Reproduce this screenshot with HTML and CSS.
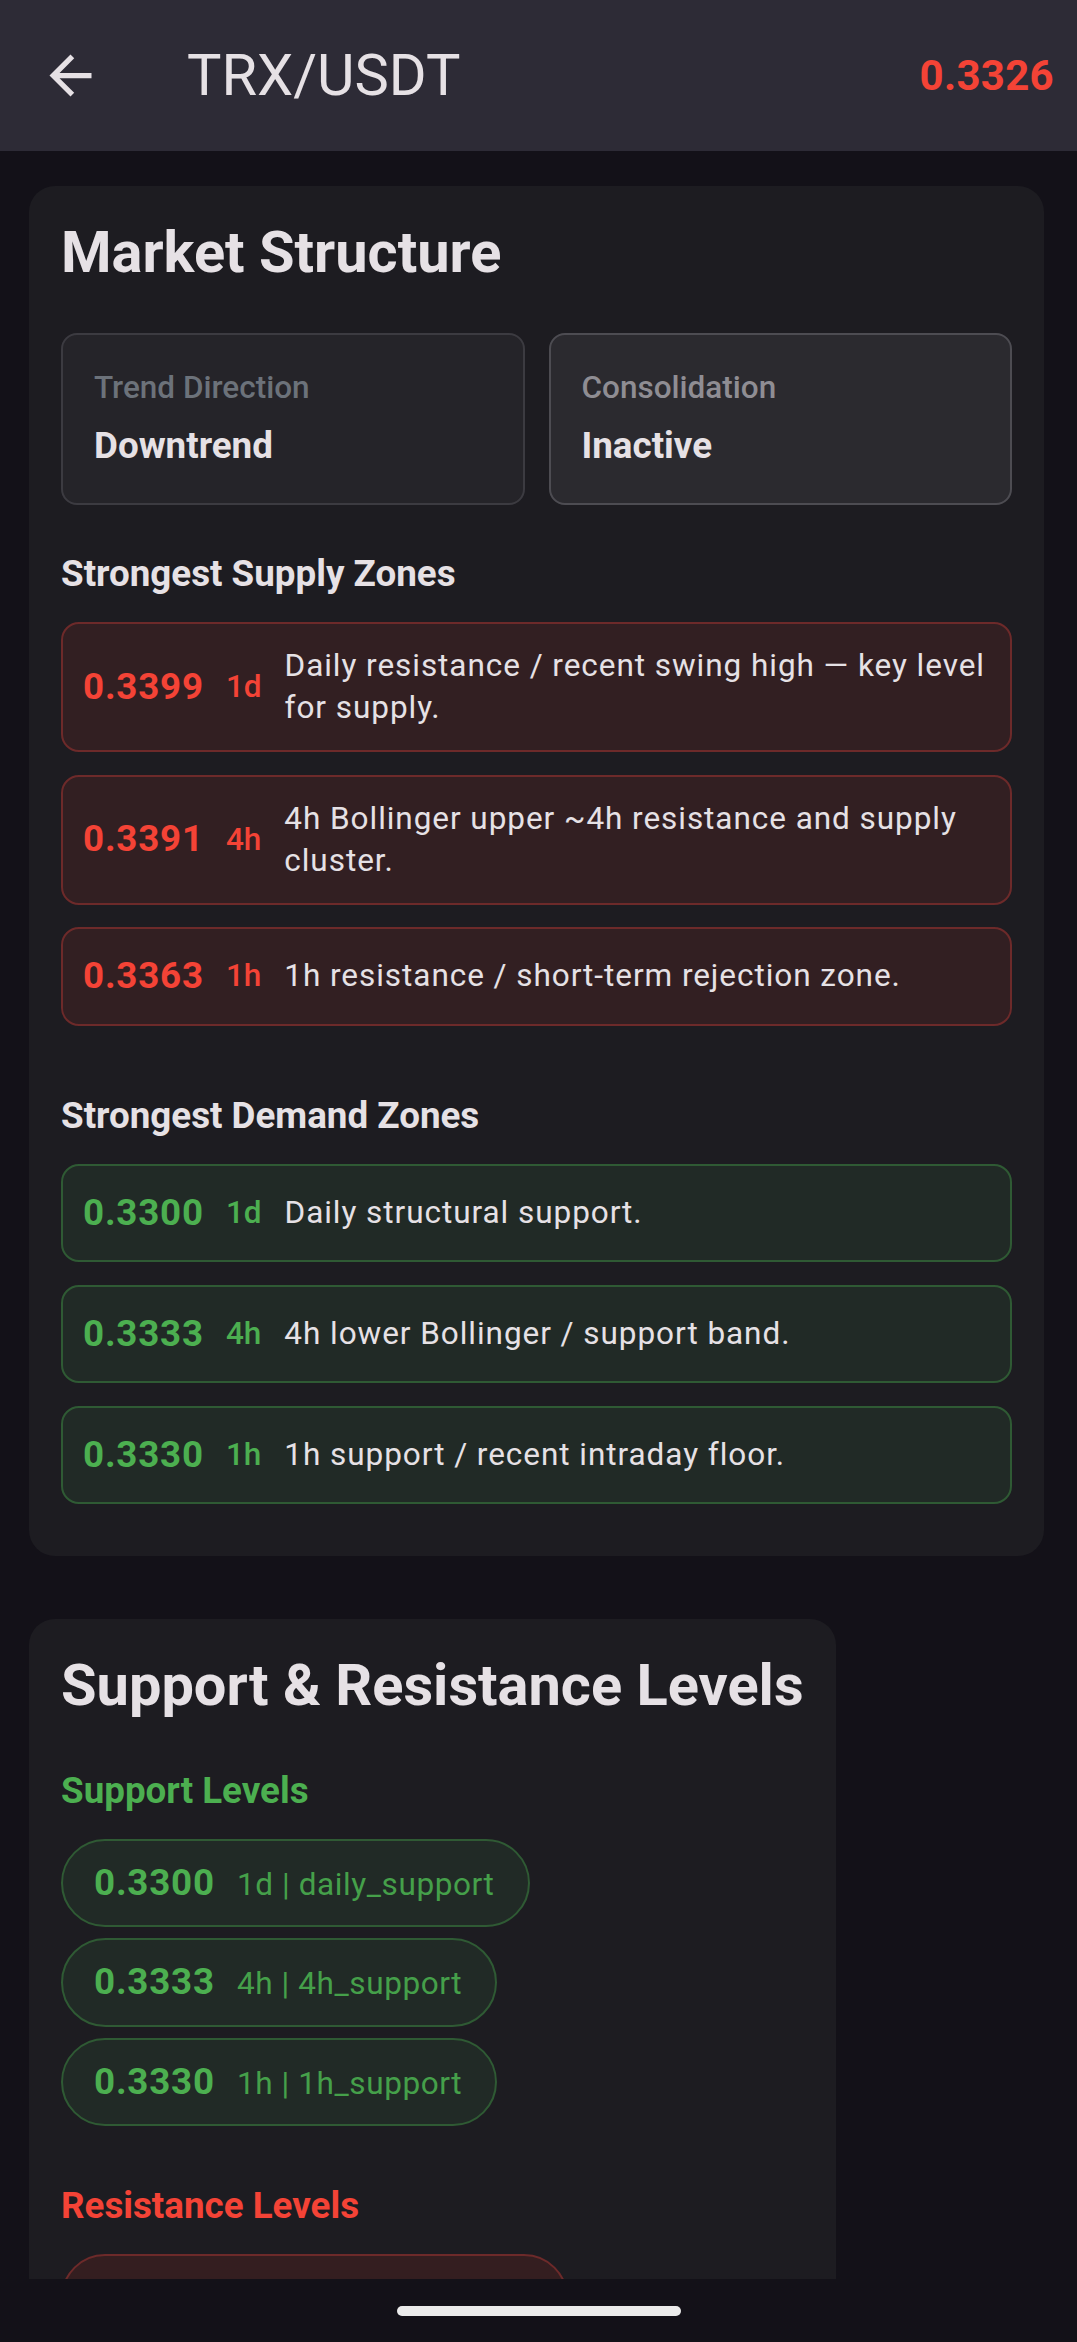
FILE: index.html
```html
<!DOCTYPE html>
<html lang="en">
<head>
<meta charset="utf-8">
<title>TRX/USDT</title>
<link rel="stylesheet" href="styles.css">
</head>
<body>
<div class="app">
  <header class="appbar">
    <svg class="back" viewBox="0 0 24 24" aria-hidden="true"><path d="M20 11H7.83l5.59-5.59L12 4l-8 8 8 8 1.41-1.41L7.83 13H20v-2z"/></svg>
    <h1 class="appbar-title">TRX/USDT</h1>
    <span class="appbar-price">0.3326</span>
  </header>

  <main class="content">
    <section class="card card-full">
      <h2 class="card-title">Market Structure</h2>
      <div class="stat-grid">
        <div class="stat stat-trend">
          <div class="stat-label">Trend Direction</div>
          <div class="stat-value">Downtrend</div>
        </div>
        <div class="stat stat-cons">
          <div class="stat-label">Consolidation</div>
          <div class="stat-value">Inactive</div>
        </div>
      </div>

      <h3 class="section-title">Strongest Supply Zones</h3>
      <div class="zone zone-supply">
        <span class="zone-price">0.3399</span>
        <span class="zone-tf">1d</span>
        <span class="zone-desc">Daily resistance / recent swing high — key level for supply.</span>
      </div>
      <div class="zone zone-supply">
        <span class="zone-price">0.3391</span>
        <span class="zone-tf">4h</span>
        <span class="zone-desc">4h Bollinger upper ~4h resistance and supply cluster.</span>
      </div>
      <div class="zone zone-supply">
        <span class="zone-price">0.3363</span>
        <span class="zone-tf">1h</span>
        <span class="zone-desc">1h resistance / short-term rejection zone.</span>
      </div>

      <h3 class="section-title section-gap">Strongest Demand Zones</h3>
      <div class="zone zone-demand">
        <span class="zone-price">0.3300</span>
        <span class="zone-tf">1d</span>
        <span class="zone-desc">Daily structural support.</span>
      </div>
      <div class="zone zone-demand">
        <span class="zone-price">0.3333</span>
        <span class="zone-tf">4h</span>
        <span class="zone-desc">4h lower Bollinger / support band.</span>
      </div>
      <div class="zone zone-demand">
        <span class="zone-price">0.3330</span>
        <span class="zone-tf">1h</span>
        <span class="zone-desc">1h support / recent intraday floor.</span>
      </div>
    </section>

    <section class="card card-fit">
      <h2 class="card-title">Support &amp; Resistance Levels</h2>
      <h3 class="level-title level-support">Support Levels</h3>
      <div class="chips">
        <div class="chip chip-support"><span class="chip-price">0.3300</span><span class="chip-meta">1d | daily_support</span></div>
        <div class="chip chip-support"><span class="chip-price">0.3333</span><span class="chip-meta">4h | 4h_support</span></div>
        <div class="chip chip-support"><span class="chip-price">0.3330</span><span class="chip-meta">1h | 1h_support</span></div>
      </div>
      <h3 class="level-title level-resist">Resistance Levels</h3>
      <div class="chips">
        <div class="chip chip-resist"><span class="chip-price">0.3399</span><span class="chip-meta">1d | daily_resistance</span></div>
      </div>
    </section>
  </main>

  <footer class="navbar"><div class="pill"></div></footer>
</div>
</body>
</html>
```

FILE: styles.css
```css
* { box-sizing: border-box; }

html, body {
  margin: 0;
  padding: 0;
  background: #131118;
  font-family: Roboto, "Noto Sans", "Liberation Sans", sans-serif;
  color: #e6e1e5;
}

.app {
  width: 1077px;
  height: 2342px;
  display: flex;
  flex-direction: column;
  overflow: hidden;
}

/* App bar */
.appbar {
  flex: 0 0 151px;
  height: 151px;
  background: #2d2b36;
  display: flex;
  align-items: center;
  padding: 0 23px 0 39px;
}
.back {
  width: 63px;
  height: 63px;
  fill: #e6e1e5;
  flex: 0 0 auto;
}
.appbar-title {
  margin: 0 0 0 85px;
  font-size: 57.75px;
  font-weight: 400;
  line-height: 73px;
  color: #e6e1e5;
  flex: 1;
}
.appbar-price {
  font-size: 42px;
  font-weight: 700;
  color: #f44336;
  letter-spacing: 0.3px;
}

/* Scroll area */
.content {
  flex: 1 1 auto;
  overflow: hidden;
  padding: 35px 33px 0 29px;
}

.card {
  background: #1d1c21;
  border-radius: 26px;
  padding: 30px 32px 29px;
}
.card-fit {
  width: fit-content;
  margin-top: 63px;
}

.card-title {
  margin: 0;
  font-size: 57.75px;
  line-height: 73.5px;
  font-weight: 700;
  color: #e6e1e5;
}

/* Stat boxes */
.stat-grid {
  margin-top: 43px;
  display: grid;
  grid-template-columns: 1fr 1fr;
  gap: 24px;
}
.stat {
  border: 2px solid #3c3b41;
  background: #252429;
  border-radius: 16px;
  padding: 32px 31px 31px;
}
.stat-cons {
  border-color: #4d4c52;
  background: #2b2a2f;
}
.stat-label {
  font-size: 31.5px;
  line-height: 42px;
  font-weight: 500;
  color: #6c727a;
}
.stat-cons .stat-label { color: #8f8d93; }
.stat-value {
  margin-top: 11px;
  font-size: 36.75px;
  line-height: 52.5px;
  font-weight: 700;
  color: #e6e1e5;
}

/* Zones */
.section-title {
  margin: 43px 0 21.5px;
  font-size: 36.75px;
  line-height: 52.5px;
  font-weight: 700;
  color: #e6e1e5;
}
.section-gap { margin-top: 64px; }

.zone {
  display: flex;
  align-items: center;
  border: 2px solid;
  border-radius: 18px;
  padding: 21px 14px 21px 20px;
  margin-bottom: 22.5px;
}
.zone-supply { background: #321f22; border-color: #6d2a2a; color: #f44336; }
.zone-demand { background: #212a26; border-color: #2f5a34; color: #4caf50; }

.zone-price {
  flex: 0 0 auto;
  font-size: 36.75px;
  line-height: 52.5px;
  font-weight: 700;
  letter-spacing: 0.8px;
}
.zone-tf {
  flex: 0 0 auto;
  margin-left: 22px;
  font-size: 31.5px;
  line-height: 42px;
  font-weight: 500;
}
.zone-desc {
  flex: 1 1 auto;
  margin-left: 23px;
  font-size: 31.5px;
  line-height: 42px;
  letter-spacing: 0.95px;
  color: #e6e1e5;
}

/* Levels */
.level-title {
  margin: 43px 0 21px;
  font-size: 36.75px;
  line-height: 52.5px;
  font-weight: 700;
}
.level-support { color: #4caf50; }
.level-resist { color: #f44336; margin-top: 43px; }

.chips {
  display: flex;
  flex-direction: column;
  align-items: flex-start;
}
.chip {
  display: inline-flex;
  align-items: baseline;
  border: 2px solid;
  border-radius: 999px;
  padding: 16px 33px 16px 31px;
  margin-bottom: 11px;
}
.chip-support { background: #212a26; border-color: #2f5a34; }
.chip-resist { background: #341e20; border-color: #6d2a2a; }
.chip-price {
  font-size: 36.75px;
  line-height: 52.5px;
  font-weight: 700;
  letter-spacing: 0.8px;
}
.chip-meta {
  margin-left: 22px;
  font-size: 31.5px;
  line-height: 42px;
  letter-spacing: 0.6px;
}
.chip-support .chip-price { color: #4caf50; }
.chip-support .chip-meta { color: #45a04a; }
.chip-resist .chip-price { color: #f44336; }
.chip-resist .chip-meta { color: #d9443a; }

/* Gesture nav */
.navbar {
  flex: 0 0 63px;
  height: 63px;
  background: #131118;
  display: flex;
  justify-content: center;
  padding-top: 27px;
}
.pill {
  width: 284px;
  height: 10px;
  border-radius: 5px;
  background: #ebebeb;
}
```
